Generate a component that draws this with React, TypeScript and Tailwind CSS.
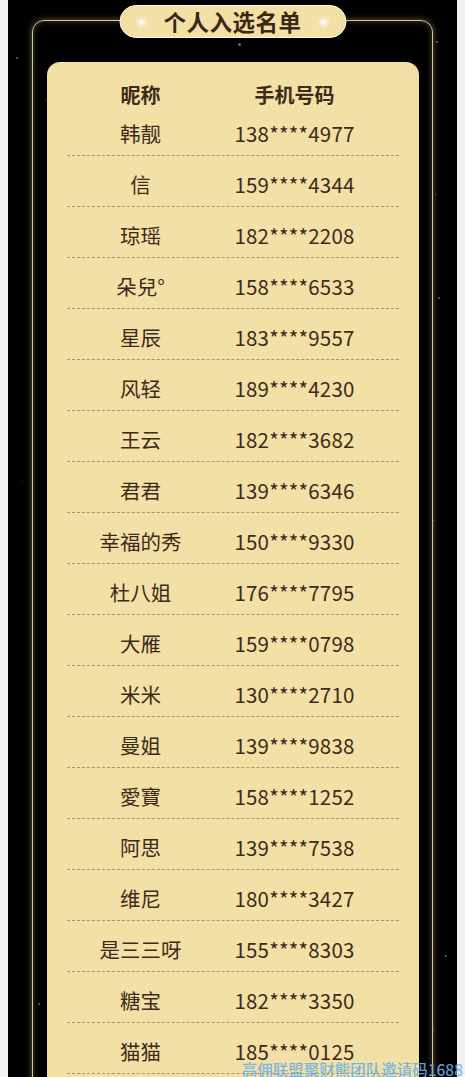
const winners = [
  { name: '韩靓', phone: '138****4977' },
  { name: '信', phone: '159****4344' },
  { name: '琼瑶', phone: '182****2208' },
  { name: '朵兒°', phone: '158****6533' },
  { name: '星辰', phone: '183****9557' },
  { name: '风轻', phone: '189****4230' },
  { name: '王云', phone: '182****3682' },
  { name: '君君', phone: '139****6346' },
  { name: '幸福的秀', phone: '150****9330' },
  { name: '杜八姐', phone: '176****7795' },
  { name: '大雁', phone: '159****0798' },
  { name: '米米', phone: '130****2710' },
  { name: '曼姐', phone: '139****9838' },
  { name: '愛寶', phone: '158****1252' },
  { name: '阿思', phone: '139****7538' },
  { name: '维尼', phone: '180****3427' },
  { name: '是三三呀', phone: '155****8303' },
  { name: '糖宝', phone: '182****3350' },
  { name: '猫猫', phone: '185****0125' },
];

// faint specks in the night sky background
const stars = [
  { x: 8, y: 57, s: 2 },
  { x: 37, y: 99, s: 1 },
  { x: 428, y: 41, s: 2 },
  { x: 266, y: 97, s: 1 },
  { x: 427, y: 194, s: 1 },
  { x: 430, y: 297, s: 2 },
  { x: 14, y: 481, s: 1 },
  { x: 425, y: 520, s: 1 },
  { x: 30, y: 1003, s: 2 },
  { x: 437, y: 955, s: 2 },
  { x: 425, y: 1030, s: 1 },
  { x: 230, y: 43, s: 3 },
];

export default function App() {
  return (
    <div className="relative h-screen overflow-hidden bg-[#f2f2f2] px-[8px] font-['Noto_Sans_CJK_SC',sans-serif] text-[#3d2b19]">
      <div className="relative h-full bg-black px-[24px] pt-[20px]">
        {stars.map((st, i) => (
          <span
            key={i}
            className="absolute rounded-full bg-white/40"
            style={{ left: st.x, top: st.y, width: st.s, height: st.s }}
          />
        ))}

        <div className="relative rounded-[12px] border-[1.5px] border-[#cfc6a0] px-[13.5px] pt-[40.5px] shadow-[0_0_6px_rgba(230,205,130,0.45),inset_0_0_6px_rgba(230,205,130,0.3)]">
          <div className="absolute left-1/2 top-[-16px] flex h-[33px] w-[227px] -translate-x-1/2 items-center justify-between rounded-full border-[1.5px] border-[#fff6dc] bg-[#f3e0a6] px-[19px]">
            <span className="h-[4px] w-[4px] rounded-full bg-white shadow-[0_0_4px_2px_rgba(255,255,255,0.8)]" />
            <span className="text-[22.5px] font-bold leading-none tracking-[0.5px] text-[#3a2815]">
              个人入选名单
            </span>
            <span className="h-[4px] w-[4px] rounded-full bg-white shadow-[0_0_4px_2px_rgba(255,255,255,0.8)]" />
          </div>

          <div className="rounded-[13px] bg-[#f2e0a6] px-[20px] pt-[21px] pb-[40px]">
            <div className="grid grid-cols-[148px_160px] text-[20px] font-bold leading-[24px]">
              <span className="text-center">昵称</span>
              <span className="text-center">手机号码</span>
            </div>
            <ul>
              {winners.map((w) => (
                <li
                  key={w.phone}
                  className="grid grid-cols-[148px_160px] border-b border-dashed border-[#a8966e] pt-[16px] pb-[10px] text-[20.5px] leading-[24px] first:pt-[14px]"
                >
                  <span className="text-center">{w.name}</span>
                  <span className="text-center tracking-[0.2px]">{w.phone}</span>
                </li>
              ))}
            </ul>
          </div>
        </div>
      </div>

      <div className="absolute bottom-[-2px] right-[2px] whitespace-nowrap text-[15.5px] font-medium leading-[20px] text-[#6cb0e4]/90">
        高佣联盟聚财熊团队邀请码1688
      </div>
    </div>
  );
}
